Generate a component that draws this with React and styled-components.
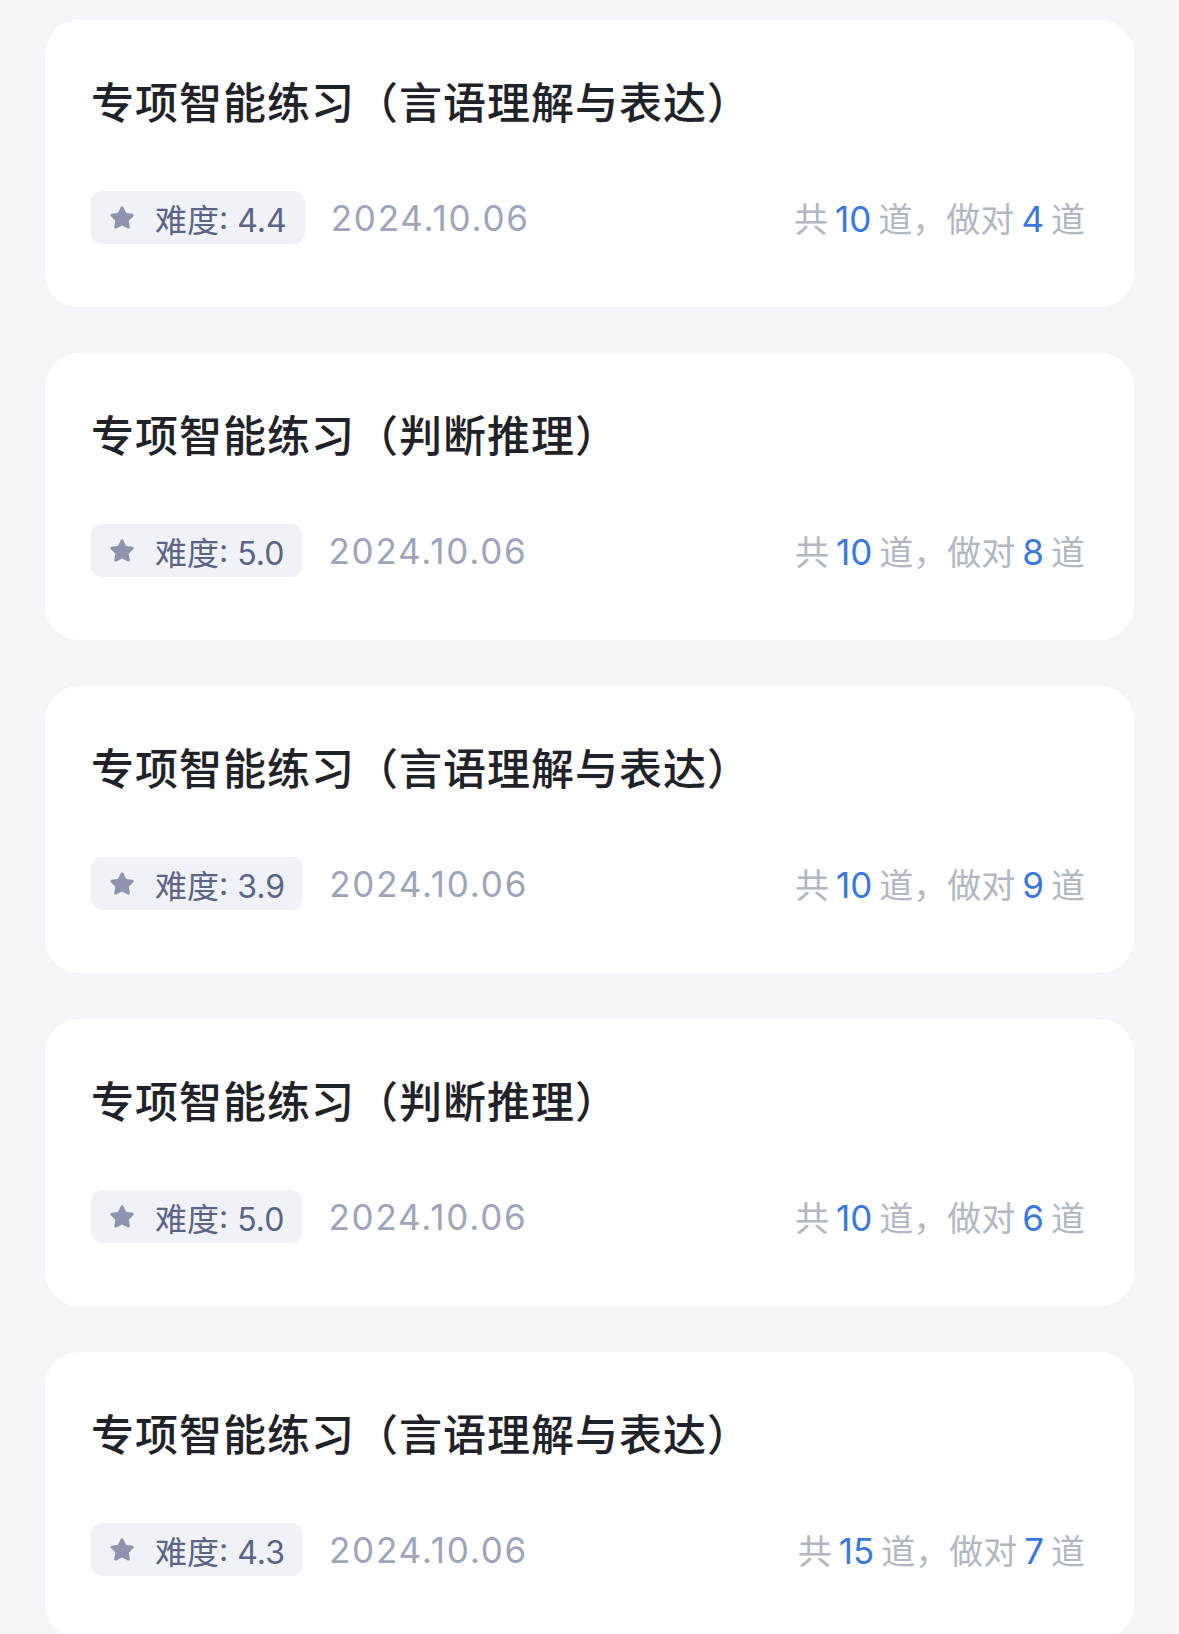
import React from "react";
import styled, { createGlobalStyle } from "styled-components";

const GlobalStyle = createGlobalStyle`
  html, body {
    margin: 0;
    padding: 0;
    background: #f5f6fa;
    overflow: hidden;
  }
  body {
    font-family: "Inter", "Noto Sans CJK SC", sans-serif;
  }
`;

const Page = styled.div`
  display: flex;
  flex-direction: column;
  gap: 46px;
  padding: 20px 45px 0 45px;
  min-height: 1634px;
  box-sizing: border-box;
`;

const Card = styled.div`
  background: #ffffff;
  border-radius: 34px;
  padding: 56px 49px 63px 46px;
  display: flex;
  flex-direction: column;
  gap: 67px;
  box-sizing: border-box;
  height: 287px;
`;

const Title = styled.div`
  font-family: "Noto Sans CJK SC", sans-serif;
  font-size: 43px;
  line-height: 48px;
  font-weight: 500;
  color: #1f2228;
  letter-spacing: 1px;
`;

const MetaRow = styled.div`
  display: flex;
  align-items: center;
`;

const Badge = styled.div`
  display: flex;
  align-items: center;
  gap: 18px;
  height: 53px;
  padding: 0 18px 0 16px;
  border-radius: 11px;
  background: #f0f2f7;
  color: #5b6486;
  font-size: 32px;
  box-sizing: border-box;
`;

const DateText = styled.span`
  margin-left: 26px;
  font-size: 35px;
  color: #9ea4ba;
  letter-spacing: 1.8px;
`;

const Stats = styled.div`
  margin-left: auto;
  font-size: 34px;
  color: #b3b7c1;
  display: flex;
  align-items: baseline;
`;

const Num = styled.span`
  color: #3a77df;
  font-size: 35px;
  margin: 0 7px;
`;

const Star = () => (
  <svg width="30" height="30" viewBox="0 0 24 24">
    <path
      d="M12 2.6c.5 0 .9.3 1.1.7l2.3 4.6 5 .7c.9.1 1.3 1.3.6 1.9l-3.6 3.6.9 5c.2.9-.8 1.6-1.6 1.2L12 18l-4.6 2.3c-.8.4-1.8-.3-1.6-1.2l.9-5-3.6-3.6c-.7-.6-.3-1.8.6-1.9l5-.7 2.3-4.6c.2-.4.6-.7 1-.7z"
      fill="#8c94b0"
    />
  </svg>
);

const items = [
  { topic: "言语理解与表达", level: "4.4", total: 10, right: 4 },
  { topic: "判断推理", level: "5.0", total: 10, right: 8 },
  { topic: "言语理解与表达", level: "3.9", total: 10, right: 9 },
  { topic: "判断推理", level: "5.0", total: 10, right: 6 },
  { topic: "言语理解与表达", level: "4.3", total: 15, right: 7 },
];

const PracticeCard = ({ topic, level, total, right }) => (
  <Card>
    <Title>专项智能练习（{topic}）</Title>
    <MetaRow>
      <Badge>
        <Star />
        <span>难度: {level}</span>
      </Badge>
      <DateText>2024.10.06</DateText>
      <Stats>
        共<Num>{total}</Num>道，做对<Num>{right}</Num>道
      </Stats>
    </MetaRow>
  </Card>
);

export default function App() {
  return (
    <>
      <GlobalStyle />
      <Page>
        {items.map((it, i) => (
          <PracticeCard key={i} {...it} />
        ))}
      </Page>
    </>
  );
}
